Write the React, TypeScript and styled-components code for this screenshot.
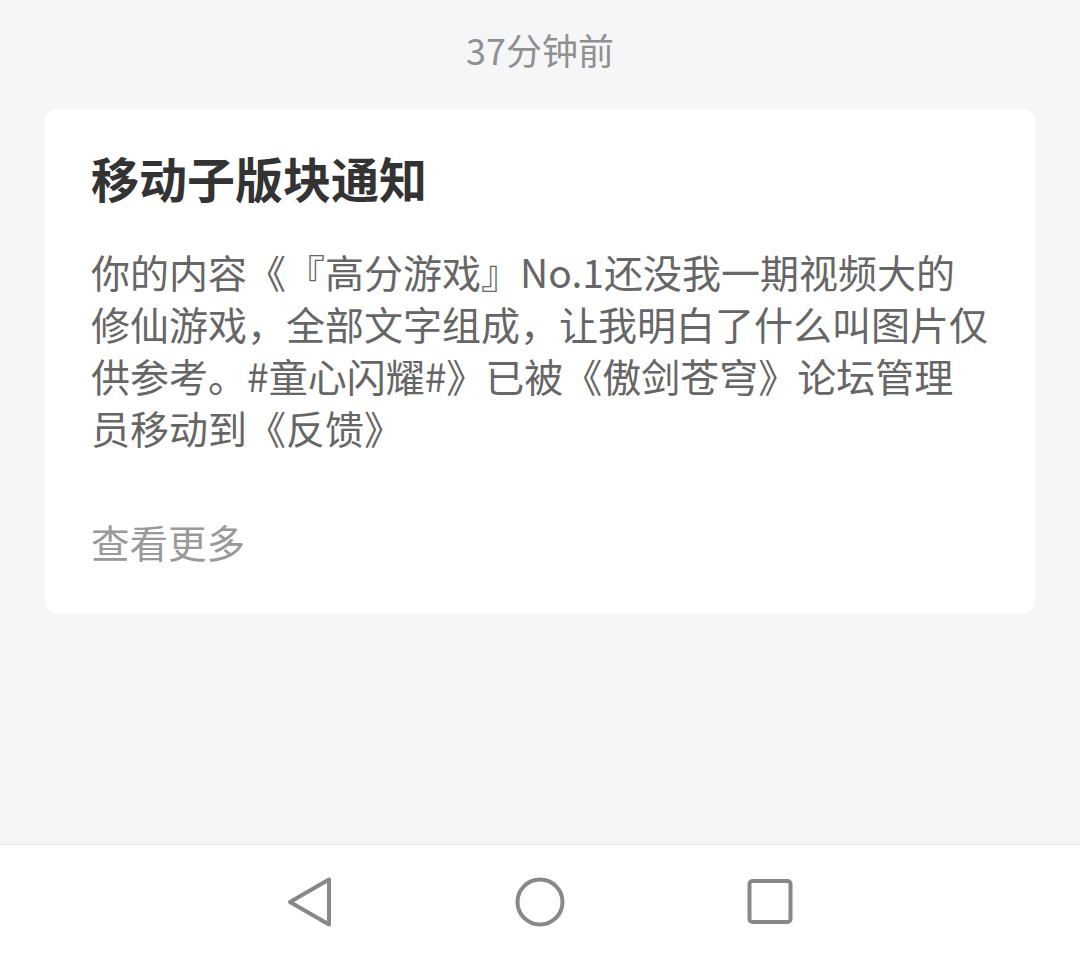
import React from "react";
import styled, { createGlobalStyle } from "styled-components";

const Global = createGlobalStyle`
  html, body { margin: 0; padding: 0; }
  body {
    background: #f5f6f8;
    font-family: "Noto Sans CJK SC", "Noto Sans", sans-serif;
  }
`;

const Page = styled.div`
  display: flex;
  flex-direction: column;
  min-height: 100vh;
  box-sizing: border-box;
`;

const Main = styled.main`
  flex: 1;
  display: flex;
  flex-direction: column;
  padding: 23px 45px 0 45px;
`;

const Time = styled.div`
  text-align: center;
  font-size: 36px;
  line-height: 52px;
  color: #909090;
`;

const Card = styled.section`
  margin-top: 34px;
  background: #ffffff;
  border-radius: 12px;
  padding: 35px 45px 46px 46px;
`;

const Title = styled.h2`
  margin: 0;
  font-size: 48px;
  line-height: 66px;
  font-weight: 700;
  color: #333333;
`;

const Body = styled.p`
  margin: 35px 0 0 0;
  font-size: 39px;
  line-height: 52px;
  color: #666666;
  word-break: break-all;
  text-spacing-trim: space-all;
`;

const More = styled.div`
  margin-top: 62px;
  font-size: 38.5px;
  line-height: 52px;
  color: #999999;
`;

const NavBar = styled.nav`
  height: 117px;
  border-top: 1px solid #e6e6e6;
  background: #ffffff;
  display: flex;
  align-items: center;
  justify-content: center;
  gap: 174px;
  padding-bottom: 2px;
  box-sizing: border-box;
`;

const NavIcon = styled.svg`
  width: 56px;
  height: 56px;
  display: block;
  flex: none;
`;

export default function App() {
  return (
    <Page>
      <Global />
      <Main>
        <Time>37分钟前</Time>
        <Card>
          <Title>移动子版块通知</Title>
          <Body>
            你的内容《『高分游戏』No.1还没我一期视频大的修仙游戏，全部文字组成，让我明白了什么叫图片仅供参考。#童心闪耀#》已被《傲剑苍穹》论坛管理员移动到《反馈》
          </Body>
          <More>查看更多</More>
        </Card>
      </Main>
      <NavBar>
        <NavIcon viewBox="0 0 56 56">
          <path
            d="M8 28 L47 5.5 L47 50.5 Z"
            fill="none"
            stroke="#888888"
            strokeWidth="4"
            strokeLinejoin="round"
          />
        </NavIcon>
        <NavIcon viewBox="0 0 56 56">
          <circle cx="28" cy="28" r="22.5" fill="none" stroke="#888888" strokeWidth="4" />
        </NavIcon>
        <NavIcon viewBox="0 0 56 56">
          <rect x="7.5" y="7" width="41" height="41" rx="3" fill="none" stroke="#888888" strokeWidth="4" />
        </NavIcon>
      </NavBar>
    </Page>
  );
}
